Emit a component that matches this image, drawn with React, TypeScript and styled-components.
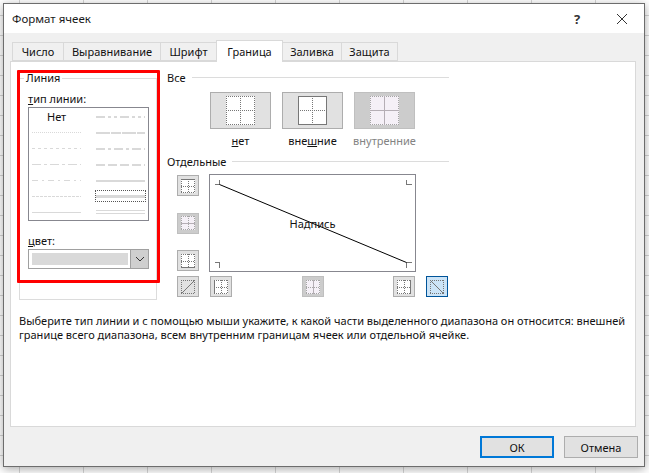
import React from 'react'
import styled, { createGlobalStyle } from 'styled-components'

const Global = createGlobalStyle`
  html, body { margin: 0; padding: 0; background: #fff; }
  * { box-sizing: border-box; }
`

const Sheet = styled.div`
  position: relative;
  width: 649px;
  height: 473px;
  overflow: hidden;
  padding: 3px 0 0 3px;
  font-family: 'Noto Sans', 'Open Sans', sans-serif;
  font-size: 11px;
  color: #111;
  background-color: #fff;
  background-image:
    linear-gradient(to right, #d6d6d6 1px, transparent 1px),
    linear-gradient(to bottom, #d6d6d6 1px, transparent 1px);
  background-size: 64px 20px;
  background-position: 19px 15px;
`

const Dialog = styled.div`
  width: 642px;
  height: 464px;
  display: flex;
  flex-direction: column;
  background: #f0f0f0;
  border: 1px solid #6d6d6d;
  box-shadow: 0 2px 9px rgba(0, 0, 0, 0.35);
`

const TitleBar = styled.div`
  height: 29px;
  flex: none;
  display: flex;
  align-items: center;
  justify-content: space-between;
  padding: 0 17px 0 8px;
  background: #fff;
`

const TitleText = styled.div`
  font-size: 11.5px;
  color: #1a1a1a;
`

const TitleActions = styled.div`
  display: flex;
  align-items: center;
  gap: 35px;
`

const HelpMark = styled.span`
  width: 10px;
  text-align: center;
  font-size: 13px;
  font-weight: 700;
  color: #333;
`

const TabRow = styled.div`
  flex: none;
  height: 28px;
  padding: 7px 0 0 8px;
  display: flex;
  align-items: flex-end;
`

const Tab = styled.div<{ $w: number; $active?: boolean }>`
  position: relative;
  z-index: ${(p) => (p.$active ? 2 : 1)};
  width: ${(p) => p.$w}px;
  height: ${(p) => (p.$active ? 22 : 19)}px;
  margin-bottom: ${(p) => (p.$active ? -1 : 0)}px;
  margin-right: -1px;
  display: flex;
  align-items: center;
  justify-content: center;
  background: ${(p) => (p.$active ? '#fff' : '#f0f0f0')};
  border: 1px solid #d9d9d9;
  border-bottom: ${(p) => (p.$active ? 'none' : '1px solid #d9d9d9')};
`

const Panel = styled.div`
  flex: none;
  width: 626px;
  height: 366px;
  margin-left: 6px;
  padding: 8px 8px 0;
  background: #fff;
  border: 1px solid #d9d9d9;
`

const Columns = styled.div`
  display: grid;
  grid-template-columns: 138px 282px;
  column-gap: 10px;
`

const LineGroup = styled.fieldset`
  margin: 0;
  height: 230px;
  padding: 4px 7px 0 8px;
  border: 1px solid #dcdcdc;
  min-width: 0;
`

const GroupLegend = styled.legend`
  margin-left: -4px;
  padding: 0 2px;
  line-height: 16px;
`

const FieldLabel = styled.div<{ $top?: number }>`
  height: 17px;
  line-height: 17px;
  margin-top: ${(p) => p.$top ?? 0}px;
`

const LineList = styled.div`
  width: 121px;
  height: 114px;
  display: grid;
  grid-template-columns: 60px 59px;
  grid-auto-rows: 16px;
  border: 1px solid #87878f;
`

const LineCell = styled.div<{ $right?: boolean }>`
  display: flex;
  align-items: center;
  padding-left: ${(p) => (p.$right ? 7 : 3)}px;
`

const SelectedLine = styled.div`
  width: 51px;
  height: 12px;
  margin-left: -1px;
  display: flex;
  align-items: center;
  justify-content: center;
  border: 1px dotted #555;
`

const NoneLabel = styled.span`
  margin-left: 15px;
`

const ColorSelect = styled.div`
  width: 121px;
  height: 20px;
  display: flex;
  align-items: stretch;
  background: #fff;
  border: 1px solid #a0a0a0;
`

const ColorBar = styled.div`
  width: 96px;
  height: 12px;
  margin: 3px 0 0 3px;
  background: #d9d9d9;
`

const SelectArrow = styled.div`
  flex: 1;
  margin-left: 2px;
  display: flex;
  align-items: center;
  justify-content: center;
  background: #cfcfcf;
  border-left: 1px solid #a0a0a0;
`

const RightColumn = styled.div`
  margin-top: -1px;
`

const SectionHeading = styled.div<{ $top?: number }>`
  display: flex;
  align-items: center;
  gap: 6px;
  height: 16px;
  margin-top: ${(p) => p.$top ?? 0}px;
  &::after {
    content: '';
    flex: 1;
    height: 1px;
    background: #dcdcdc;
  }
`

const Presets = styled.div`
  display: flex;
  gap: 11px;
  margin: 7px 0 0 43px;
`

const Preset = styled.div`
  width: 61px;
  display: flex;
  flex-direction: column;
  align-items: center;
`

const PresetButton = styled.div<{ $disabled?: boolean }>`
  width: 61px;
  height: 37px;
  display: flex;
  align-items: center;
  justify-content: center;
  background: ${(p) => (p.$disabled ? '#cccccc' : '#e1e1e1')};
  border: 1px solid ${(p) => (p.$disabled ? '#bfbfbf' : '#adadad')};
`

const PresetLabel = styled.div<{ $disabled?: boolean }>`
  margin-top: 4px;
  line-height: 16px;
  white-space: nowrap;
  color: ${(p) => (p.$disabled ? '#838383' : '#111')};
`

const Editor = styled.div`
  display: grid;
  grid-template-columns: 22px 207px 22px;
  grid-template-rows: 98px 21px;
  column-gap: 10px;
  row-gap: 4px;
  margin: 5px 0 0 10px;
`

const SideStack = styled.div`
  display: flex;
  flex-direction: column;
  justify-content: space-between;
  padding: 1px 0;
`

const BottomStack = styled.div`
  display: flex;
  justify-content: space-between;
  padding: 0 1px;
`

const EdgeButton = styled.div<{ $disabled?: boolean; $active?: boolean }>`
  width: 22px;
  height: 21px;
  display: flex;
  align-items: center;
  justify-content: center;
  background: ${(p) => (p.$active ? '#cce4f7' : p.$disabled ? '#cccccc' : '#e1e1e1')};
  border: 1px solid ${(p) => (p.$active ? '#005499' : p.$disabled ? '#bfbfbf' : '#adadad')};
`

const Preview = styled.div`
  position: relative;
  display: flex;
  align-items: center;
  justify-content: center;
  border: 1px solid #87878f;
  background: #fff;
`

const PreviewLines = styled.svg`
  position: absolute;
  left: 0;
  top: 0;
`

const PreviewText = styled.span`
  position: relative;
`

const Description = styled.p`
  margin: 14px 0 0;
  width: 612px;
  line-height: 13.5px;
`

const Footer = styled.div`
  flex: 1;
  display: flex;
  justify-content: flex-end;
  gap: 10px;
  padding: 9px 6px 0 0;
`

const DialogButton = styled.div<{ $primary?: boolean }>`
  width: 74px;
  height: 22px;
  display: flex;
  align-items: center;
  justify-content: center;
  background: #e1e1e1;
  border: ${(p) => (p.$primary ? '2px solid #0078d7' : '1px solid #adadad')};
`

const Annotation = styled.div`
  position: absolute;
  left: 17px;
  top: 70px;
  width: 143px;
  height: 213px;
  border: 3px solid #ff0000;
  border-radius: 1px;
`

type Dash = { dash?: string; weight?: number; double?: boolean; color?: string }

const LineSwatch: React.FC<Dash> = ({ dash, weight = 1, double, color = '#d9d9d9' }) => (
  <svg width="49" height="5" style={{ display: 'block', flex: 'none' }} shapeRendering="crispEdges">
    {double ? (
      <>
        <line x1="0" x2="49" y1="0.5" y2="0.5" stroke={color} />
        <line x1="0" x2="49" y1="3.5" y2="3.5" stroke={color} />
      </>
    ) : (
      <line x1="0" x2="49" y1="2.5" y2="2.5" stroke={color} strokeWidth={weight} strokeDasharray={dash} />
    )}
  </svg>
)

type Edge = 'top' | 'hmid' | 'bottom' | 'left' | 'vmid' | 'right' | 'diagUp' | 'diagDown'

const CellGlyph: React.FC<{ size?: number; edges?: Edge[]; muted?: boolean }> = ({ size = 14, edges = [], muted }) => {
  const max = size - 0.5
  const mid = Math.floor(size / 2) + 0.5
  const dotted = muted ? '#a5a5a5' : '#777'
  const solid = muted ? '#b5aeb5' : '#777'
  const segments: Record<Edge, [number, number, number, number]> = {
    top: [0, 0.5, size, 0.5],
    hmid: [0, mid, size, mid],
    bottom: [0, max, size, max],
    left: [0.5, 0, 0.5, size],
    vmid: [mid, 0, mid, size],
    right: [max, 0, max, size],
    diagUp: [0, size, size, 0],
    diagDown: [0, 0, size, size],
  }
  const isDiagonal = edges.includes('diagUp') || edges.includes('diagDown')
  // the diagonal buttons show only the cell outline, no inner cross
  const base: Edge[] = isDiagonal ? ['top', 'bottom', 'left', 'right'] : ['top', 'bottom', 'left', 'right', 'hmid', 'vmid']
  return (
    <svg width={size} height={size} style={{ display: 'block' }}>
      <rect width={size} height={size} fill={muted ? '#f5f0f7' : isDiagonal ? 'none' : '#fff'} />
      {base
        .filter((e) => !edges.includes(e))
        .map((e) => {
          const [x1, y1, x2, y2] = segments[e]
          return (
            <line key={e} x1={x1} y1={y1} x2={x2} y2={y2} stroke={dotted} strokeDasharray="1 1" shapeRendering="crispEdges" />
          )
        })}
      {edges.map((e) => {
        const [x1, y1, x2, y2] = segments[e]
        const diagonal = e === 'diagUp' || e === 'diagDown'
        return (
          <line
            key={e}
            x1={x1}
            y1={y1}
            x2={x2}
            y2={y2}
            stroke={solid}
            shapeRendering={diagonal ? 'auto' : 'crispEdges'}
          />
        )
      })}
    </svg>
  )
}

const App: React.FC = () => (
  <>
    <Global />
    <Sheet>
      <Dialog>
        <TitleBar>
          <TitleText>Формат ячеек</TitleText>
          <TitleActions>
            <HelpMark>?</HelpMark>
            <svg width="10" height="10" viewBox="0 0 10 10" style={{ display: 'block' }}>
              <path d="M0 0 L10 10 M10 0 L0 10" stroke="#333" fill="none" />
            </svg>
          </TitleActions>
        </TitleBar>

        <TabRow>
          <Tab $w={52}>Число</Tab>
          <Tab $w={98}>Выравнивание</Tab>
          <Tab $w={57}>Шрифт</Tab>
          <Tab $w={67} $active>Граница</Tab>
          <Tab $w={60}>Заливка</Tab>
          <Tab $w={57}>Защита</Tab>
        </TabRow>

        <Panel>
          <Columns>
            <LineGroup>
              <GroupLegend>Линия</GroupLegend>
              <FieldLabel><u>т</u>ип линии:</FieldLabel>
              <LineList>
                <LineCell><NoneLabel>Нет</NoneLabel></LineCell>
                <LineCell $right><LineSwatch weight={2} dash="9 3 3 3 3 3" /></LineCell>
                <LineCell><LineSwatch dash="1 1" /></LineCell>
                <LineCell $right><LineSwatch weight={2} dash="14 1 10 1" /></LineCell>
                <LineCell><LineSwatch dash="3 3" /></LineCell>
                <LineCell $right><LineSwatch weight={2} dash="9 3 3 3" /></LineCell>
                <LineCell><LineSwatch dash="9 3 3 3" /></LineCell>
                <LineCell $right><LineSwatch weight={2} dash="9 3" /></LineCell>
                <LineCell><LineSwatch dash="6 4 2 4" /></LineCell>
                <LineCell $right><LineSwatch weight={2} /></LineCell>
                <LineCell><LineSwatch dash="3 1" /></LineCell>
                <LineCell $right><SelectedLine><LineSwatch weight={3} /></SelectedLine></LineCell>
                <LineCell><LineSwatch /></LineCell>
                <LineCell $right><LineSwatch double /></LineCell>
              </LineList>
              <FieldLabel $top={11}><u>ц</u>вет:</FieldLabel>
              <ColorSelect>
                <ColorBar />
                <SelectArrow>
                  <svg width="10" height="6" viewBox="0 0 10 6" style={{ display: 'block' }}>
                    <path d="M1 1 L5 5 L9 1" stroke="#333" fill="none" />
                  </svg>
                </SelectArrow>
              </ColorSelect>
            </LineGroup>

            <RightColumn>
              <SectionHeading>Все</SectionHeading>
              <Presets>
                <Preset>
                  <PresetButton><CellGlyph size={29} /></PresetButton>
                  <PresetLabel><u>н</u>ет</PresetLabel>
                </Preset>
                <Preset>
                  <PresetButton><CellGlyph size={29} edges={['top', 'bottom', 'left', 'right']} /></PresetButton>
                  <PresetLabel>вне<u>ш</u>ние</PresetLabel>
                </Preset>
                <Preset>
                  <PresetButton $disabled><CellGlyph size={29} muted edges={['hmid', 'vmid']} /></PresetButton>
                  <PresetLabel $disabled>внутренние</PresetLabel>
                </Preset>
              </Presets>

              <SectionHeading $top={4}>Отдельные</SectionHeading>
              <Editor>
                <SideStack>
                  <EdgeButton><CellGlyph edges={['top']} /></EdgeButton>
                  <EdgeButton $disabled><CellGlyph muted edges={['hmid']} /></EdgeButton>
                  <EdgeButton><CellGlyph edges={['bottom']} /></EdgeButton>
                </SideStack>
                <Preview>
                  <PreviewLines width="205" height="96">
                    <path
                      d="M4.5 9.5 H9.5 V4.5 M196.5 4.5 V9.5 H201.5 M4.5 87.5 H9.5 V92.5 M196.5 92.5 V87.5 H201.5"
                      stroke="#777"
                      fill="none"
                      shapeRendering="crispEdges"
                    />
                    <line x1="9.5" y1="9.5" x2="196.5" y2="87.5" stroke="#000" />
                  </PreviewLines>
                  <PreviewText>Надпись</PreviewText>
                </Preview>
                <div />
                <EdgeButton><CellGlyph edges={['diagUp']} /></EdgeButton>
                <BottomStack>
                  <EdgeButton><CellGlyph edges={['left']} /></EdgeButton>
                  <EdgeButton $disabled><CellGlyph muted edges={['vmid']} /></EdgeButton>
                  <EdgeButton><CellGlyph edges={['right']} /></EdgeButton>
                </BottomStack>
                <EdgeButton $active><CellGlyph edges={['diagDown']} /></EdgeButton>
              </Editor>
            </RightColumn>
          </Columns>

          <Description>
            Выберите тип линии и с помощью мыши укажите, к какой части выделенного диапазона он относится: внешней
            границе всего диапазона, всем внутренним границам ячеек или отдельной ячейке.
          </Description>
        </Panel>

        <Footer>
          <DialogButton $primary>ОК</DialogButton>
          <DialogButton>Отмена</DialogButton>
        </Footer>
      </Dialog>
      <Annotation />
    </Sheet>
  </>
)

export default App
